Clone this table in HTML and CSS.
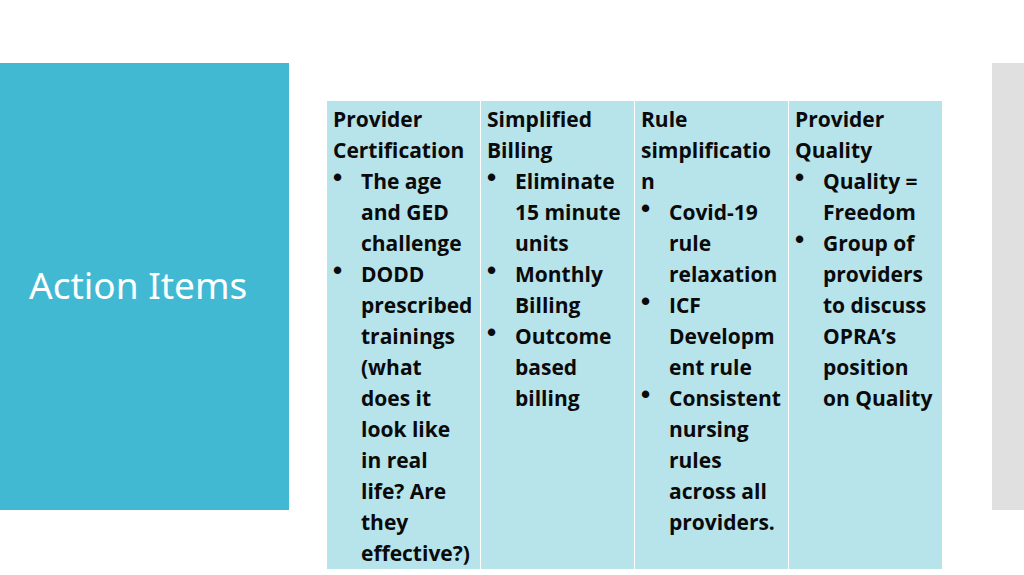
FILE: index.html
```html
<!DOCTYPE html>
<html>
<head>
<meta charset="utf-8">
<link rel="stylesheet" href="styles.css">
</head>
<body>
<div class="slide">
  <div class="title-panel">
    <h1 class="title">Action Items</h1>
  </div>
  <div class="content">
    <table class="items">
      <tr>
        <td>
          <div class="head">Provider Certification</div>
          <ul>
            <li>The age and GED challenge</li>
            <li>DODD prescribed trainings (what does it look like in real life? Are they effective?)</li>
          </ul>
        </td>
        <td>
          <div class="head">Simplified Billing</div>
          <ul>
            <li>Eliminate 15 minute units</li>
            <li>Monthly Billing</li>
            <li>Outcome based billing</li>
          </ul>
        </td>
        <td>
          <div class="head">Rule simplificatio<br>n</div>
          <ul>
            <li>Covid-19 rule relaxation</li>
            <li>ICF Developm<br>ent rule</li>
            <li>Consistent nursing rules across all providers.</li>
          </ul>
        </td>
        <td>
          <div class="head">Provider Quality</div>
          <ul>
            <li>Quality = Freedom</li>
            <li>Group of providers to discuss OPRA’s position on Quality</li>
          </ul>
        </td>
      </tr>
    </table>
  </div>
  <div class="side-bar"></div>
</div>
</body>
</html>
```
FILE: styles.css
```css
html, body {
  margin: 0;
  padding: 0;
  background: #ffffff;
}
body {
  width: 1024px;
  height: 575px;
  overflow: hidden;
  font-family: "Noto Sans", "Open Sans", sans-serif;
}
.slide {
  display: flex;
  align-items: flex-start;
  width: 1024px;
  height: 575px;
}
.title-panel {
  width: 289px;
  height: 447px;
  margin-top: 63px;
  background: #42b9d3;
  display: flex;
  align-items: center;
  flex-shrink: 0;
}
.title {
  margin: 0 0 4px 29px;
  font-weight: 400;
  font-size: 37px;
  line-height: 1;
  color: #ffffff;
}
.content {
  margin-left: 37px;
  margin-top: 100px;
  flex-shrink: 0;
}
.items {
  border-collapse: collapse;
  table-layout: fixed;
  width: 616px;
}
.items td {
  width: 142px;
  vertical-align: top;
  background: #b7e3eb;
  border: 1px solid #ffffff;
  padding: 3px 5px 0 6px;
  font-family: "Open Sans", "Noto Sans", sans-serif;
  font-weight: 700;
  font-size: 21px;
  line-height: 31px;
  color: #0a0a0a;
}
.head {
  margin: 0;
}
.items ul {
  list-style: none;
  margin: 0;
  padding: 0;
}
.items li {
  display: flex;
}
.items li::before {
  content: "•";
  flex: 0 0 28px;
  font-family: "Liberation Sans", Arial, sans-serif;
  font-size: 26px;
  transform: translateY(-4px);
}
.side-bar {
  margin-left: auto;
  margin-top: 63px;
  width: 32px;
  height: 447px;
  background: #e0e0e0;
  flex-shrink: 0;
}
```
